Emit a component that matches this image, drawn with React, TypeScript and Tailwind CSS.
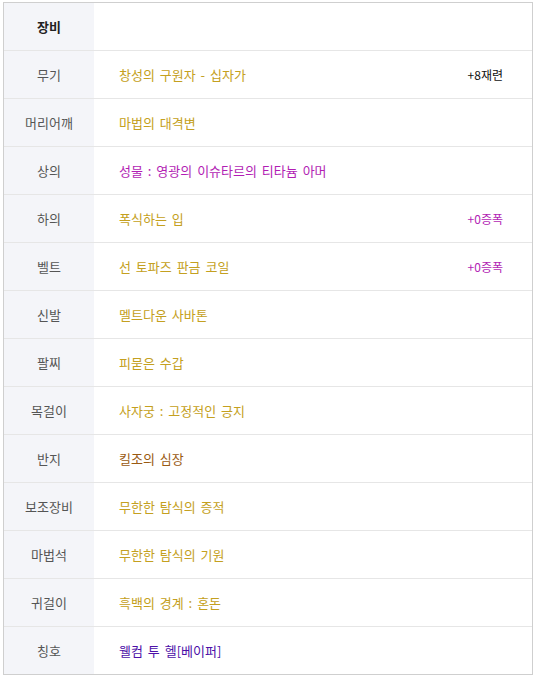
type Row = {
  slot: string;
  name: string;
  color: string;
  extra?: string;
  extraColor?: string;
};

const rows: Row[] = [
  { slot: '무기', name: '창성의 구원자 - 십자가', color: 'text-[#c4a020]', extra: '+8재련', extraColor: 'text-[#111111]' },
  { slot: '머리어깨', name: '마법의 대격변', color: 'text-[#c4a020]' },
  { slot: '상의', name: '성물 : 영광의 이슈타르의 티타늄 아머', color: 'text-[#b21eb4]' },
  { slot: '하의', name: '폭식하는 입', color: 'text-[#c4a020]', extra: '+0증폭', extraColor: 'text-[#b21eb4]' },
  { slot: '벨트', name: '선 토파즈 판금 코일', color: 'text-[#c4a020]', extra: '+0증폭', extraColor: 'text-[#b21eb4]' },
  { slot: '신발', name: '멜트다운 사바톤', color: 'text-[#c4a020]' },
  { slot: '팔찌', name: '피묻은 수갑', color: 'text-[#c4a020]' },
  { slot: '목걸이', name: '사자궁 : 고정적인 긍지', color: 'text-[#c4a020]' },
  { slot: '반지', name: '킬조의 심장', color: 'text-[#9a5a12]' },
  { slot: '보조장비', name: '무한한 탐식의 증적', color: 'text-[#c4a020]' },
  { slot: '마법석', name: '무한한 탐식의 기원', color: 'text-[#c4a020]' },
  { slot: '귀걸이', name: '흑백의 경계 : 혼돈', color: 'text-[#c4a020]' },
  { slot: '칭호', name: '웰컴 투 헬[베이퍼]', color: 'text-[#4d10a8]' },
];

export default function App() {
  return (
    <div className="w-[535px] h-[677px] bg-white pt-[2px] pl-[3px] font-['Noto_Sans_CJK_KR','Noto_Sans',sans-serif] text-[13px]">
      <div className="w-[530px] border border-[#cfcfcf]">
        {/* header */}
        <div className="flex h-[47px]">
          <div className="w-[90px] bg-[#f4f5f9] flex items-center justify-center font-bold text-[#222222]">
            장비
          </div>
          <div className="flex-1" />
        </div>

        {rows.map(row => (
          <div key={row.slot} className="flex h-[48px] border-t border-[#e6e6e6]">
            <div className="w-[90px] bg-[#f4f5f9] flex items-center justify-center text-[#555555]">
              {row.slot}
            </div>
            <div className="flex-1 flex items-center justify-between pl-[25px] pr-[29px]">
              <span className={`${row.color} [word-spacing:2px]`}>{row.name}</span>
              {row.extra && <span className={`${row.extraColor} text-[12px]`}>{row.extra}</span>}
            </div>
          </div>
        ))}
      </div>
    </div>
  );
}
